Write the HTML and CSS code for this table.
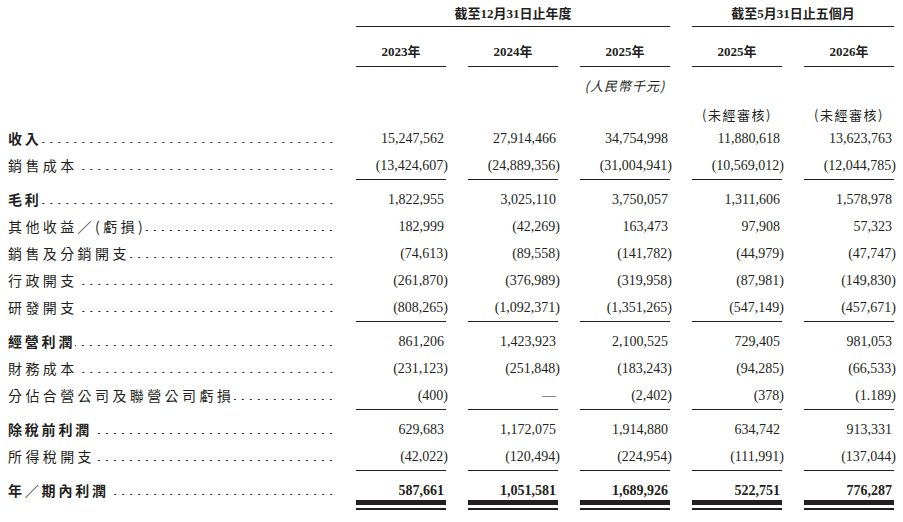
FILE: index.html
```html
<!DOCTYPE html>
<html lang="zh-Hant">
<head>
<meta charset="utf-8">
<link rel="stylesheet" href="styles.css">
</head>
<body>
<div class="page">
  <div class="row head1">
    <div></div>
    <div class="group g1">截至12月31日止年度</div>
    <div class="group g2">截至5月31日止五個月</div>
  </div>
  <div class="row head2">
    <div></div>
    <div class="year">2023年</div>
    <div class="year">2024年</div>
    <div class="year">2025年</div>
    <div class="year">2025年</div>
    <div class="year">2026年</div>
  </div>
  <div class="row head3">
    <div></div><div></div><div></div>
    <div class="unit">(人民幣千元)</div>
    <div></div><div></div>
  </div>
  <div class="row head4">
    <div></div><div></div><div></div><div></div>
    <div class="audit">(未經審核)</div>
    <div class="audit">(未經審核)</div>
  </div>

  <div class="row line first">
    <div class="label b"><span>收入</span><i class="dots"></i></div>
    <div class="num"><span class="p">15,247,562</span></div>
    <div class="num"><span class="p">27,914,466</span></div>
    <div class="num"><span class="p">34,754,998</span></div>
    <div class="num"><span class="p">11,880,618</span></div>
    <div class="num"><span class="p">13,623,763</span></div>
  </div>
  <div class="row line">
    <div class="label"><span>銷售成本 </span><i class="dots"></i></div>
    <div class="num"><span class="n">(13,424,607)</span></div>
    <div class="num"><span class="n">(24,889,356)</span></div>
    <div class="num"><span class="n">(31,004,941)</span></div>
    <div class="num"><span class="n">(10,569,012)</span></div>
    <div class="num"><span class="n">(12,044,785)</span></div>
  </div>
  <div class="row line sub">
    <div class="label b"><span>毛利</span><i class="dots"></i></div>
    <div class="num"><span class="p">1,822,955</span></div>
    <div class="num"><span class="p">3,025,110</span></div>
    <div class="num"><span class="p">3,750,057</span></div>
    <div class="num"><span class="p">1,311,606</span></div>
    <div class="num"><span class="p">1,578,978</span></div>
  </div>
  <div class="row line">
    <div class="label"><span>其他收益／(虧損)</span><i class="dots"></i></div>
    <div class="num"><span class="p">182,999</span></div>
    <div class="num"><span class="n">(42,269)</span></div>
    <div class="num"><span class="p">163,473</span></div>
    <div class="num"><span class="p">97,908</span></div>
    <div class="num"><span class="p">57,323</span></div>
  </div>
  <div class="row line">
    <div class="label"><span>銷售及分銷開支</span><i class="dots"></i></div>
    <div class="num"><span class="n">(74,613)</span></div>
    <div class="num"><span class="n">(89,558)</span></div>
    <div class="num"><span class="n">(141,782)</span></div>
    <div class="num"><span class="n">(44,979)</span></div>
    <div class="num"><span class="n">(47,747)</span></div>
  </div>
  <div class="row line">
    <div class="label"><span>行政開支 </span><i class="dots"></i></div>
    <div class="num"><span class="n">(261,870)</span></div>
    <div class="num"><span class="n">(376,989)</span></div>
    <div class="num"><span class="n">(319,958)</span></div>
    <div class="num"><span class="n">(87,981)</span></div>
    <div class="num"><span class="n">(149,830)</span></div>
  </div>
  <div class="row line">
    <div class="label"><span>研發開支 </span><i class="dots"></i></div>
    <div class="num"><span class="n">(808,265)</span></div>
    <div class="num"><span class="n">(1,092,371)</span></div>
    <div class="num"><span class="n">(1,351,265)</span></div>
    <div class="num"><span class="n">(547,149)</span></div>
    <div class="num"><span class="n">(457,671)</span></div>
  </div>
  <div class="row line sub">
    <div class="label b"><span>經營利潤 </span><i class="dots"></i></div>
    <div class="num"><span class="p">861,206</span></div>
    <div class="num"><span class="p">1,423,923</span></div>
    <div class="num"><span class="p">2,100,525</span></div>
    <div class="num"><span class="p">729,405</span></div>
    <div class="num"><span class="p">981,053</span></div>
  </div>
  <div class="row line">
    <div class="label"><span>財務成本 </span><i class="dots"></i></div>
    <div class="num"><span class="n">(231,123)</span></div>
    <div class="num"><span class="n">(251,848)</span></div>
    <div class="num"><span class="n">(183,243)</span></div>
    <div class="num"><span class="n">(94,285)</span></div>
    <div class="num"><span class="n">(66,533)</span></div>
  </div>
  <div class="row line">
    <div class="label"><span>分佔合營公司及聯營公司虧損</span><i class="dots"></i></div>
    <div class="num"><span class="n">(400)</span></div>
    <div class="num"><span class="p">—</span></div>
    <div class="num"><span class="n">(2,402)</span></div>
    <div class="num"><span class="n">(378)</span></div>
    <div class="num"><span class="n">(1.189)</span></div>
  </div>
  <div class="row line sub">
    <div class="label b"><span>除稅前利潤 </span><i class="dots"></i></div>
    <div class="num"><span class="p">629,683</span></div>
    <div class="num"><span class="p">1,172,075</span></div>
    <div class="num"><span class="p">1,914,880</span></div>
    <div class="num"><span class="p">634,742</span></div>
    <div class="num"><span class="p">913,331</span></div>
  </div>
  <div class="row line">
    <div class="label"><span>所得稅開支 </span><i class="dots"></i></div>
    <div class="num"><span class="n">(42,022)</span></div>
    <div class="num"><span class="n">(120,494)</span></div>
    <div class="num"><span class="n">(224,954)</span></div>
    <div class="num"><span class="n">(111,991)</span></div>
    <div class="num"><span class="n">(137,044)</span></div>
  </div>
  <div class="row line sub total">
    <div class="label b"><span>年／期內利潤 </span><i class="dots"></i></div>
    <div class="num"><span class="p">587,661</span></div>
    <div class="num"><span class="p">1,051,581</span></div>
    <div class="num"><span class="p">1,689,926</span></div>
    <div class="num"><span class="p">522,751</span></div>
    <div class="num"><span class="p">776,287</span></div>
  </div>
</div>
</body>
</html>
```

FILE: styles.css
```css
html, body {
  margin: 0;
  padding: 0;
  background: #ffffff;
}

body {
  color: #231f20;
  font-family: "Liberation Serif", "Noto Sans CJK TC", serif;
}

.page {
  padding: 0 8px;
  width: 887px;
}

.row {
  display: grid;
  grid-template-columns: 326px repeat(5, 90px);
  column-gap: 22px;
}

/* header */
.group {
  font-weight: 700;
  font-size: 13px;
  line-height: 20px;
  text-align: center;
  padding-top: 4px;
  padding-bottom: 2px;
  border-bottom: 1px solid #231f20;
}
.g1 { grid-column: 2 / span 3; }
.g2 { grid-column: 5 / span 2; }

.year {
  font-weight: 700;
  font-size: 13px;
  line-height: 20px;
  text-align: center;
  padding-top: 15px;
  padding-bottom: 4px;
  border-bottom: 1px solid #231f20;
}

.unit {
  font-family: "Noto Sans CJK TC", sans-serif;
  font-style: italic;
  font-size: 13px;
  line-height: 20px;
  letter-spacing: 1px;
  text-align: center;
  padding-top: 9px;
}

.audit {
  font-family: "Noto Sans CJK TC", sans-serif;
  font-size: 13px;
  line-height: 20px;
  letter-spacing: 1.5px;
  text-align: center;
  padding-top: 9px;
}

/* body rows */
.line > div {
  height: 27px;
  line-height: 27px;
}

.label {
  display: flex;
  font-family: "Noto Sans CJK TC", sans-serif;
  font-size: 14px;
  letter-spacing: 3.4px;
  white-space: nowrap;
  font-weight: 400;
}
.label.b { font-weight: 700; letter-spacing: 2.8px; }

.dots {
  flex: 1;
  background-image: radial-gradient(circle at center, #231f20 0.85px, transparent 1.1px);
  background-size: 8px 3px;
  background-repeat: repeat-x;
  background-position: right -1px bottom 8px;
}

.num {
  font-family: "Liberation Serif", serif;
  font-size: 14px;
  text-align: right;
  white-space: nowrap;
}
.num .p { margin-right: 2px; }
.num .n { margin-right: -2px; }

.sub > div {
  padding-top: 7px;
}
.sub > .num {
  border-top: 1px solid #231f20;
  padding-top: 6px;
}

.total > .num {
  font-weight: 700;
  height: 33px;
  background-image:
    linear-gradient(#231f20, #231f20),
    linear-gradient(#231f20, #231f20);
  background-size: 100% 5px, 100% 2px;
  background-position: left 0 bottom 5px, left 0 bottom 0;
  background-repeat: no-repeat;
}
```
